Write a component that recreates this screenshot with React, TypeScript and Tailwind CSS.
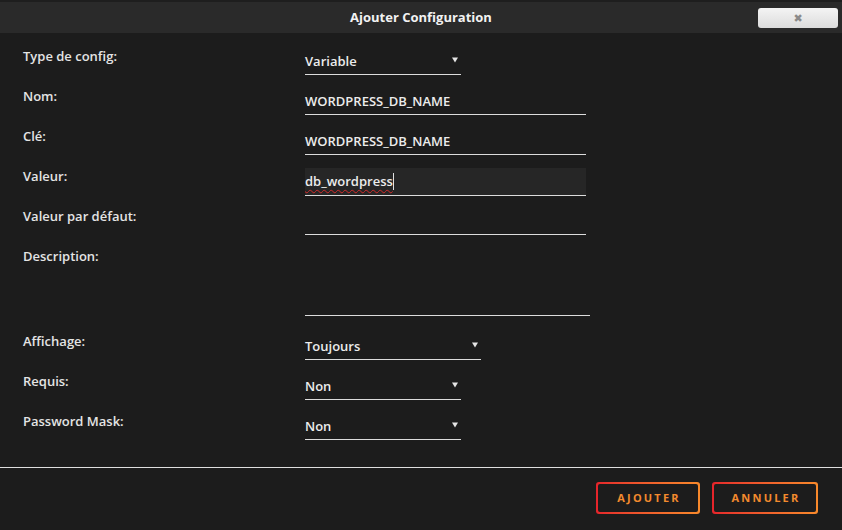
import React from "react";

const font = { fontFamily: '"Open Sans", "DejaVu Sans", sans-serif' };

function Arrow() {
	return (
		<svg width="6" height="6" viewBox="0 0 6 6" className="mb-[2px]">
			<path d="M0 0.5 H6 L3 5.5 Z" fill="#e6e6e6" />
		</svg>
	);
}

function Row({
	label,
	children,
	tall,
}: {
	label: string;
	children: React.ReactNode;
	tall?: boolean;
}) {
	return (
		<div className={`flex ${tall ? "h-[85px]" : "h-[40px]"}`}>
			<div className="w-[282px] text-[13px] leading-[16px] font-semibold text-[#e4e4e4]">
				{label}
			</div>
			<div>{children}</div>
		</div>
	);
}

function Select({ value, width }: { value: string; width: string }) {
	return (
		<div
			className={`${width} flex h-[27px] items-center justify-between border-b border-[#dcdcdc] pr-[3px] text-[13px] font-semibold text-[#ececec]`}
		>
			<span className="mt-[1px]">{value}</span>
			<Arrow />
		</div>
	);
}

function Text({ value }: { value?: string }) {
	return (
		<div className="flex h-[27px] w-[281px] items-center border-b border-[#dcdcdc] text-[13px] font-semibold text-[#ececec]">
			<span className="mt-[1px]">{value}</span>
		</div>
	);
}

function GradButton({ label, width }: { label: string; width: string }) {
	return (
		<div className={`${width} rounded-[3px] bg-linear-to-r from-[#e5232b] to-[#f8892b] p-[2px]`}>
			<div className="flex h-[28px] items-center justify-center rounded-[2px] bg-[#1c1c1c] pl-[2px] text-[11px] font-bold tracking-[2.2px] text-[#f38a2e]">
				{label}
			</div>
		</div>
	);
}

export default function App() {
	return (
		<div style={font} className="flex h-[530px] w-[842px] flex-col bg-[#1c1c1c]">
			<div className="h-[2px] bg-[#1e1e1e]" />
			<div className="relative flex h-[31px] items-center justify-center bg-[#2a2a2a]">
				<span className="mt-[1px] text-[13px] font-bold text-[#f2f2f2]">Ajouter Configuration</span>
				<button
					type="button"
					className="absolute top-[6px] right-[4px] flex h-[20px] w-[80px] items-center justify-center rounded-[3px] bg-linear-to-b from-[#f4f4f4] to-[#dcdcdc] text-[11px] font-bold text-[#8a8a8a]"
				>
					✖
				</button>
			</div>

			<div className="flex flex-col px-[23px] pt-[15px]">
				<Row label="Type de config:">
					<Select value="Variable" width="w-[156px]" />
				</Row>
				<Row label="Nom:">
					<Text value="WORDPRESS_DB_NAME" />
				</Row>
				<Row label="Clé:">
					<Text value="WORDPRESS_DB_NAME" />
				</Row>
				<Row label="Valeur:">
					<div className="flex h-[28px] w-[281px] items-center border-b border-[#dcdcdc] bg-[#262626] text-[13px] font-semibold text-[#ececec]">
						<span className="mt-[1px] underline decoration-[#d42a2a] decoration-wavy decoration-1 underline-offset-[3px]">
							db_wordpress
						</span>
						<span className="h-[17px] w-[1px] bg-[#e0e0e0]" />
					</div>
				</Row>
				<Row label="Valeur par défaut:">
					<Text />
				</Row>
				<Row label="Description:" tall>
					<div className="h-[68px] w-[285px] border-b border-[#dcdcdc]" />
				</Row>
				<Row label="Affichage:">
					<Select value="Toujours" width="w-[176px]" />
				</Row>
				<Row label="Requis:">
					<Select value="Non" width="w-[156px]" />
				</Row>
				<Row label="Password Mask:">
					<Select value="Non" width="w-[156px]" />
				</Row>
			</div>

			<div className="mt-[14px] h-[1px] bg-[#dedede]" />
			<div className="flex justify-end gap-[12px] pt-[14px] pr-[24px]">
				<GradButton label="AJOUTER" width="w-[104px]" />
				<GradButton label="ANNULER" width="w-[106px]" />
			</div>
		</div>
	);
}
